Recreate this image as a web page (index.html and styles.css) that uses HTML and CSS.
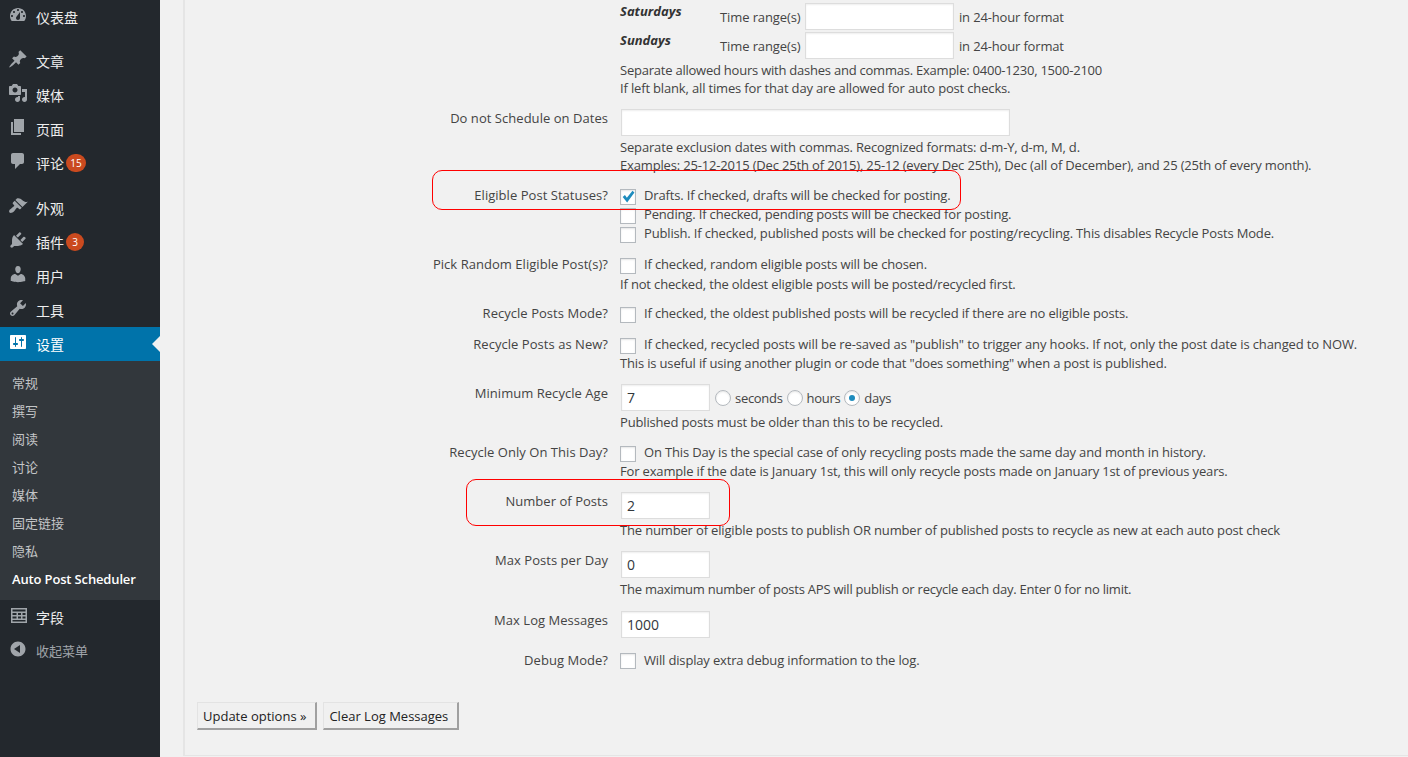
FILE: index.html
```html
<!DOCTYPE html>
<html lang="zh">
<head>
<meta charset="utf-8">
<title>Auto Post Scheduler</title>
<link rel="stylesheet" href="styles.css">
</head>
<body>
<div class="layout">
<nav class="sidebar">
  <ul class="menu">
    <li class="item"><svg class="ico" viewBox="0 0 20 20"><path fill-rule="evenodd" d="M3.76 16h12.48c1.1-1.37 1.76-3.11 1.76-5 0-4.42-3.58-8-8-8s-8 3.58-8 8c0 1.89.66 3.63 1.76 5zM10 4c.55 0 1 .45 1 1s-.45 1-1 1-1-.45-1-1 .45-1 1-1zM6 6c.55 0 1 .45 1 1s-.45 1-1 1-1-.45-1-1 .45-1 1-1zm8 0c.55 0 1 .45 1 1s-.45 1-1 1-1-.45-1-1 .45-1 1-1zm-5.37 5.55L12 7v6c0 1.1-.9 2-2 2s-2-.9-2-2c0-.57.24-1.08.63-1.45zM4 10c.55 0 1 .45 1 1s-.45 1-1 1-1-.45-1-1 .45-1 1-1zm12 0c.55 0 1 .45 1 1s-.45 1-1 1-1-.45-1-1 .45-1 1-1z"/></svg><span>仪表盘</span></li>
    <li class="item sep"><svg class="ico" viewBox="0 0 20 20"><path d="M10.44 3.02l1.82-1.82 6.36 6.35-1.83 1.82c-1.05-.68-2.48-.57-3.41.36l-.75.75c-.92.93-1.04 2.35-.35 3.41l-1.83 1.82-2.41-2.41-2.8 2.79c-.42.42-3.38 2.71-3.8 2.29s1.86-3.39 2.28-3.81l2.79-2.79L4.1 9.36l1.83-1.82c1.05.69 2.48.57 3.4-.36l.75-.75c.93-.92 1.05-2.35.36-3.41z"/></svg><span>文章</span></li>
    <li class="item"><svg class="ico" viewBox="0 0 20 20"><path fill-rule="evenodd" d="M13 11V4c0-.55-.45-1-1-1h-1.67L9 1H5L3.67 3H2c-.55 0-1 .45-1 1v7c0 .55.45 1 1 1h10c.55 0 1-.45 1-1zM7 4.5c1.38 0 2.5 1.12 2.5 2.5S8.38 9.5 7 9.5 4.5 8.38 4.5 7 5.62 4.5 7 4.5zM14 6h5v10.5c0 1.38-1.12 2.5-2.5 2.5S14 17.88 14 16.5s1.12-2.5 2.5-2.5c.17 0 .34.02.5.05V9h-3V6zm-4 8.05V13h2v3.5c0 1.38-1.12 2.5-2.5 2.5S7 17.88 7 16.5 8.12 14 9.5 14c.17 0 .34.02.5.05z"/></svg><span>媒体</span></li>
    <li class="item"><svg class="ico" viewBox="0 0 20 20"><path d="M6 15V2h10v13H6zm-1 1h8v2H3V5h2v11z"/></svg><span>页面</span></li>
    <li class="item"><svg class="ico" viewBox="0 0 20 20"><path d="M5 2h9c1.1 0 2 .9 2 2v7c0 1.1-.9 2-2 2h-2l-5 5v-5H5c-1.1 0-2-.9-2-2V4c0-1.1.9-2 2-2z"/></svg><span>评论</span><b class="badge wide">15</b></li>
    <li class="item sep2"><svg class="ico" viewBox="0 0 20 20"><path d="M14.48 11.06L7.41 3.99l1.5-1.5c.5-.56 2.3-.47 3.51.32 1.21.8 1.43 1.28 2.91 2.1 1.18.64 2.45 1.26 4.45.85zm-.71.71L6.7 4.7 4.93 6.47c-.39.39-.39 1.02 0 1.41l1.06 1.06c.39.39.39 1.03 0 1.42-.6.6-1.43 1.11-2.21 1.69-.35.26-.7.53-1.01.84C1.43 13.23.5 15.59 1.5 16.5c1.01 1 3.27.07 4.61-1.27.31-.31.58-.66.84-1.01.58-.78 1.09-1.61 1.69-2.21.39-.39 1.02-.39 1.41 0l1.06 1.06c.39.39 1.02.39 1.41 0z"/></svg><span>外观</span></li>
    <li class="item"><svg class="ico" viewBox="0 0 20 20"><path d="M13.11 4.36L9.87 7.6 8 5.73l3.24-3.24c.35-.34 1.05-.2 1.56.32.52.51.66 1.21.31 1.55zm-8 1.77l.91-1.12 9.01 9.01-1.19.84c-.71.71-2.63 1.16-3.82 1.16H6.14L4.9 17.26c-.59.59-1.54.59-2.12 0-.59-.58-.59-1.53 0-2.12l1.24-1.24v-3.88c0-1.13.4-3.19 1.09-3.89zm7.26 3.97l3.24-3.24c.34-.35 1.04-.21 1.55.31.52.51.66 1.21.31 1.55l-3.24 3.25z"/></svg><span>插件</span><b class="badge">3</b></li>
    <li class="item"><svg class="ico" viewBox="0 0 20 20"><path d="M10 9.25c-2.27 0-2.73-3.44-2.73-3.44C7 4.02 7.82 2 9.97 2c2.16 0 2.98 2.02 2.71 3.81 0 0-.41 3.44-2.68 3.44zm0 2.57L12.72 10c2.39 0 4.52 2.33 4.52 4.53v2.49s-3.65 1.13-7.24 1.13c-3.65 0-7.24-1.13-7.24-1.13v-2.49c0-2.25 1.94-4.48 4.47-4.48z"/></svg><span>用户</span></li>
    <li class="item"><svg class="ico" viewBox="0 0 20 20"><path fill-rule="evenodd" d="M16.68 9.77c-1.34 1.34-3.3 1.67-4.95.99l-5.41 6.52c-.99.99-2.59.99-3.58 0s-.99-2.59 0-3.57l6.52-5.42c-.68-1.65-.35-3.61.99-4.95 1.28-1.28 3.12-1.62 4.72-1.06l-2.89 2.89 2.82 2.82 2.86-2.87c.53 1.58.18 3.39-1.08 4.65zM3.81 16.21c.4.39 1.04.39 1.43 0 .4-.4.4-1.04 0-1.43-.39-.4-1.03-.4-1.43 0-.39.39-.39 1.03 0 1.43z"/></svg><span>工具</span></li>
    <li class="item active"><svg class="ico" viewBox="0 0 20 20"><path fill-rule="evenodd" d="M18 16V4c0-.55-.45-1-1-1H3c-.55 0-1 .45-1 1v12c0 .55.45 1 1 1h14c.55 0 1-.45 1-1zM8 11h1c.55 0 1 .45 1 1s-.45 1-1 1H8v1.5c0 .28-.22.5-.5.5s-.5-.22-.5-.5V13H6c-.55 0-1-.45-1-1s.45-1 1-1h1V5.5c0-.28.22-.5.5-.5s.5.22.5.5V11zm5-2h-1c-.55 0-1-.45-1-1s.45-1 1-1h1V5.5c0-.28.22-.5.5-.5s.5.22.5.5V7h1c.55 0 1 .45 1 1s-.45 1-1 1h-1v5.5c0 .28-.22.5-.5.5s-.5-.22-.5-.5V9z"/></svg><span>设置</span></li>
    <li class="subs">
      <ul class="submenu">
        <li>常规</li><li>撰写</li><li>阅读</li><li>讨论</li><li>媒体</li><li>固定链接</li><li>隐私</li><li class="current">Auto Post Scheduler</li>
      </ul>
    </li>
    <li class="item"><svg class="ico" viewBox="0 0 20 20"><path fill-rule="evenodd" d="M3 3h16v15H3zM4.5 4.5v2h13v-2zM4.500 8v2h4V8zm5.500 0v2h3V8zm4.500 0v2h3V8zM4.500 11.500v2h4v-2zm5.500 0v2h3v-2zm4.500 0v2h3v-2zM4.500 15v1.500h13V15z"/></svg><span>字段</span></li>
    <li class="item collapse"><svg class="ico" viewBox="0 0 20 20"><path d="M10 2.500c-4.140 0-7.500 3.360-7.500 7.500s3.360 7.500 7.500 7.500 7.500-3.360 7.500-7.500-3.360-7.500-7.500-7.500zm2 11.500l-6-4 6-4v8z"/></svg><span>收起菜单</span></li>
  </ul>
</nav>
<main class="panel">
  <form class="form">
    <div class="row first">
      <div></div>
      <div>
        <div class="day"><em>Saturdays</em><span class="tr">Time range(s)</span><input class="time" type="text"><span>in 24-hour format</span></div>
        <div class="day"><em>Sundays</em><span class="tr">Time range(s)</span><input class="time" type="text"><span>in 24-hour format</span></div>
        <p class="help"><span class="narrow">Separate allowed hours with dashes and commas. Example: 0400-1230, 1500-2100</span><br>If left blank, all times for that day are allowed for auto post checks.</p>
      </div>
    </div>
    <div class="row">
      <label class="lbl">Do not Schedule on Dates</label>
      <div><input class="wide-in" type="text">
        <p class="help">Separate exclusion dates with commas. Recognized formats: d-m-Y, d-m, M, d.<br>Examples: 25-12-2015 (Dec 25th of 2015), 25-12 (every Dec 25th), Dec (all of December), and 25 (25th of every month).</p>
      </div>
    </div>
    <div class="row">
      <label class="lbl">Eligible Post Statuses?</label>
      <div>
        <div class="chk"><input type="checkbox" checked><span>Drafts. If checked, drafts will be checked for posting.</span></div>
        <div class="chk"><input type="checkbox"><span>Pending. If checked, pending posts will be checked for posting.</span></div>
        <div class="chk"><input type="checkbox"><span>Publish. If checked, published posts will be checked for posting/recycling. This disables Recycle Posts Mode.</span></div>
      </div>
    </div>
    <div class="row">
      <label class="lbl">Pick Random Eligible Post(s)?</label>
      <div>
        <div class="chk"><input type="checkbox"><span>If checked, random eligible posts will be chosen.</span></div>
        <p class="note">If not checked, the oldest eligible posts will be posted/recycled first.</p>
      </div>
    </div>
    <div class="row tight">
      <label class="lbl">Recycle Posts Mode?</label>
      <div class="chk"><input type="checkbox"><span>If checked, the oldest published posts will be recycled if there are no eligible posts.</span></div>
    </div>
    <div class="row">
      <label class="lbl">Recycle Posts as New?</label>
      <div>
        <div class="chk"><input type="checkbox"><span class="roomy">If checked, recycled posts will be re-saved as "publish" to trigger any hooks. If not, only the post date is changed to NOW.</span></div>
        <p class="note flush">This is useful if using another plugin or code that "does something" when a post is published.</p>
      </div>
    </div>
    <div class="row">
      <label class="lbl">Minimum Recycle Age</label>
      <div>
        <div class="age"><input class="num" type="text" value="7">
          <input type="radio" name="u"><span>seconds</span>
          <input type="radio" name="u"><span>hours</span>
          <input type="radio" name="u" checked><span>days</span>
        </div>
        <p class="help">Published posts must be older than this to be recycled.</p>
      </div>
    </div>
    <div class="row">
      <label class="lbl">Recycle Only On This Day?</label>
      <div>
        <div class="chk"><input type="checkbox"><span>On This Day is the special case of only recycling posts made the same day and month in history.</span></div>
        <p class="note flush">For example if the date is January 1st, this will only recycle posts made on January 1st of previous years.</p>
      </div>
    </div>
    <div class="row">
      <label class="lbl">Number of Posts</label>
      <div><input class="num" type="text" value="2">
        <p class="help">The number of eligible posts to publish OR number of published posts to recycle as new at each auto post check</p>
      </div>
    </div>
    <div class="row">
      <label class="lbl">Max Posts per Day</label>
      <div><input class="num" type="text" value="0">
        <p class="help narrow">The maximum number of posts APS will publish or recycle each day. Enter 0 for no limit.</p>
      </div>
    </div>
    <div class="row loose">
      <label class="lbl">Max Log Messages</label>
      <div><input class="num" type="text" value="1000"></div>
    </div>
    <div class="row debug">
      <label class="lbl">Debug Mode?</label>
      <div class="chk"><input type="checkbox"><span>Will display extra debug information to the log.</span></div>
    </div>
    <div class="actions">
      <button type="button">Update options »</button>
      <button type="button">Clear Log Messages</button>
    </div>
  </form>
  <div class="mark mark-a"></div>
  <div class="mark mark-b"></div>
</main>
</div>
</body>
</html>
```
FILE: styles.css
```css
* { box-sizing: border-box; }
html, body { margin: 0; height: 100%; overflow: hidden; }
body {
  background: #f1f1f1;
  color: #444;
  font: 13px/18px "Open Sans", "Noto Sans CJK SC", sans-serif;
}
ul { list-style: none; margin: 0; padding: 0; }
p { margin: 0; }

.layout { display: grid; grid-template-columns: 160px 1fr; height: 757px; }

.sidebar { background: #23282d; font-family: "Noto Sans CJK SC", sans-serif; }
.item {
  position: relative;
  display: flex;
  align-items: center;
  height: 34px;
  padding-left: 8px;
  color: #eee;
  font-size: 14px;
}
.item.sep { margin-top: 10px; }
.item.sep2 { margin-top: 11px; }
.ico { width: 20px; height: 20px; margin: -5px 8px 0 0; fill: #a0a5aa; flex: none; }
.badge {
  display: block;
  height: 18px;
  min-width: 18px;
  margin-left: 2px;
  border-radius: 9px;
  background: #ca4a1f;
  color: #fff;
  font: 400 10px/18px "Open Sans", sans-serif;
  text-align: center;
}
.badge.wide { min-width: 20px; }
.active { background: #0073aa; color: #fff; }
.active .ico { fill: #fff; }
.active::after {
  content: "";
  position: absolute;
  right: 0;
  top: 9px;
  border: 8px solid transparent;
  border-right-color: #f1f1f1;
  border-left-width: 0;
}
.subs { background: #32373c; padding: 8px 0 7px; }
.submenu li {
  height: 28px;
  padding-left: 12px;
  line-height: 28px;
  font-size: 13px;
  color: #c3c5c7;
}
.submenu .current {
  color: #fff;
  font-weight: 600;
  font-family: "Open Sans", sans-serif;
  letter-spacing: -.15px;
}
.collapse { color: #a0a5aa; font-size: 13px; }

.panel {
  position: relative;
  margin: 0 0 1px 23px;
  border-left: 2px solid #e5e5e5;
  border-bottom: 1px solid #e5e5e5;
  padding-left: 12px;
}
.form { display: flex; flex-direction: column; }
.row {
  display: grid;
  grid-template-columns: 411px 1fr;
  column-gap: 12px;
  margin-top: 12px;
  align-items: start;
}
.row > div { letter-spacing: -.16px; }
.row.first { margin-top: 0; padding-top: 3px; }
.row.tight { margin-top: 11px; }
.row.loose { margin-top: 13px; }
.row.debug .lbl, .row.debug span { padding-top: 1px; }
.lbl { display: block; text-align: right; letter-spacing: .04px; }
.narrow { letter-spacing: -.23px; }
.roomy { letter-spacing: -.12px; }

input[type="text"] {
  display: block;
  height: 27px;
  margin: 0 1px;
  padding: 0 5px;
  border: 1px solid #ddd;
  background: #fff;
  box-shadow: inset 0 1px 2px rgba(0,0,0,.07);
  color: #32373c;
  font: 14px "Open Sans", sans-serif;
  outline: 0;
}
.day { display: flex; align-items: center; height: 27px; }
.day + .day { margin-top: 2px; }
.day em {
  width: 100px;
  align-self: flex-start;
  margin-top: -1px;
  font-weight: 700;
  color: #333;
  letter-spacing: 0;
}
.day .tr { width: 84px; letter-spacing: -.1px; }
.time { width: 149px; margin: 0 5px 0 1px !important; }
.help { margin-top: 2px; }
.note { margin-top: 1px; }
.note.flush { margin-top: 0; }
.wide-in { width: 389px; }
.num { width: 89px; }

.chk { display: flex; height: 19px; }
.chk span { margin-left: 8px; }
input[type="checkbox"], input[type="radio"] {
  appearance: none;
  flex: none;
  position: relative;
  width: 16px;
  height: 16px;
  margin: 3px 0 0;
  border: 1px solid #b4b9be;
  background: #fff;
  box-shadow: inset 0 1px 2px rgba(0,0,0,.1);
}
input[type="checkbox"]:checked::before {
  content: "";
  position: absolute;
  left: 0;
  top: 0;
  width: 14px;
  height: 14px;
  background: #1e8cbe;
  clip-path: polygon(12% 50%, 28% 36%, 42% 56%, 82% 6%, 96% 18%, 44% 90%);
}
.age { display: flex; align-items: center; height: 27px; letter-spacing: -.3px; }
.age .num { margin-right: 5px; }
.age span { margin: 0 4px; }
input[type="radio"] { margin: 1px 0 0; border-radius: 50%; }
input[type="radio"]:checked::before {
  content: "";
  position: absolute;
  left: 4px;
  top: 4px;
  width: 6px;
  height: 6px;
  border-radius: 50%;
  background: #1e8cbe;
}

.actions { display: flex; gap: 6px; margin-top: 33px; }
button {
  height: 28px;
  padding: 0 9px 0 5px;
  border: 1px solid;
  border-color: #e3e3e3 #a0a0a0 #a0a0a0 #e3e3e3;
  border-width: 1px 2px 2px 1px;
  background: #f0f0f0;
  color: #222;
  font: 13px "Open Sans", sans-serif;
}

.mark { position: absolute; border: 1px solid #f00; border-radius: 10px; }
.mark-a { left: 247px; top: 170px; width: 529px; height: 40px; }
.mark-b { left: 281px; top: 479px; width: 264px; height: 47px; }
```
